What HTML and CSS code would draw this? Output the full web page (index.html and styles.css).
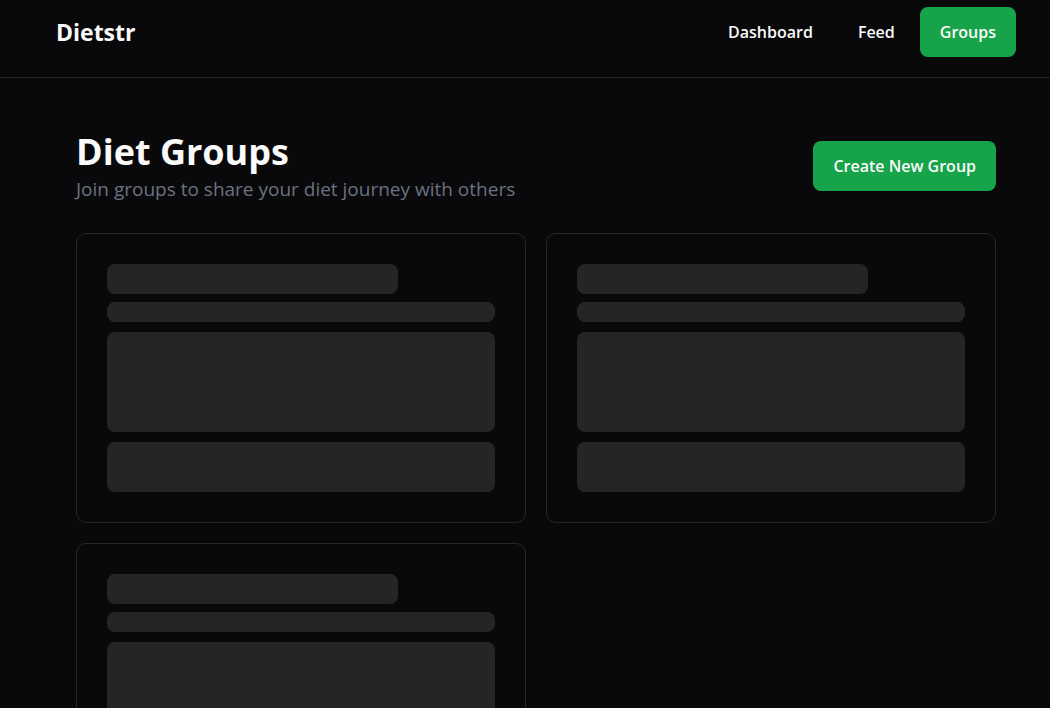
FILE: index.html
```html
<!DOCTYPE html>
<html lang="en">
<head>
<meta charset="utf-8">
<meta name="viewport" content="width=device-width, initial-scale=1">
<title>Dietstr</title>
<link rel="stylesheet" href="styles.css">
</head>
<body>
<header class="site-header">
  <a class="brand" href="#">Dietstr</a>
  <nav class="nav">
    <a class="btn" href="#">Dashboard</a>
    <a class="btn" href="#">Feed</a>
    <a class="btn btn-primary" href="#" aria-current="page">Groups</a>
  </nav>
</header>
<main class="page">
  <div class="page-head">
    <div>
      <h1 class="title">Diet Groups</h1>
      <p class="subtitle">Join groups to share your diet journey with others</p>
    </div>
    <button class="btn btn-primary" type="button">Create New Group</button>
  </div>
  <div class="cards" aria-busy="true">
    <div class="card">
      <div class="bone bone-title"></div>
      <div class="bone bone-line"></div>
      <div class="bone bone-body"></div>
      <div class="bone bone-action"></div>
    </div>
    <div class="card">
      <div class="bone bone-title"></div>
      <div class="bone bone-line"></div>
      <div class="bone bone-body"></div>
      <div class="bone bone-action"></div>
    </div>
    <div class="card">
      <div class="bone bone-title"></div>
      <div class="bone bone-line"></div>
      <div class="bone bone-body"></div>
      <div class="bone bone-action"></div>
    </div>
  </div>
</main>
</body>
</html>
```
FILE: styles.css
```css
* {
  box-sizing: border-box;
}

body {
  margin: 0;
  background: #09090b;
  color: #fafafa;
  font-family: "Segoe UI", "Open Sans", "Noto Sans", sans-serif;
}

.site-header {
  display: flex;
  align-items: center;
  justify-content: space-between;
  padding: 7px 34px 20px 56px;
  border-bottom: 1px solid #27272a;
}

.brand {
  color: inherit;
  font-size: 23px;
  font-weight: 700;
  line-height: 36px;
  text-decoration: none;
}

.nav {
  display: flex;
  gap: 5px;
}

.btn {
  display: inline-flex;
  align-items: center;
  justify-content: center;
  height: 50px;
  padding: 0 20px;
  border: 0;
  border-radius: 8px;
  background: transparent;
  color: #fafafa;
  font-family: inherit;
  font-size: 16px;
  font-weight: 600;
  line-height: 24px;
  text-decoration: none;
  white-space: nowrap;
}

.btn-primary {
  background: #16a34a;
}

.page {
  padding: 50px 54px 40px 76px;
}

.page-head {
  display: flex;
  align-items: center;
  justify-content: space-between;
  margin-bottom: 30px;
}

.title {
  margin: 0;
  font-size: 36px;
  font-weight: 700;
  line-height: 47px;
}

.subtitle {
  margin: 0;
  color: #6b7280;
  font-size: 19px;
  line-height: 28px;
}

.cards {
  display: grid;
  grid-template-columns: 1fr 1fr;
  gap: 20px;
}

.card {
  padding: 30px;
  border: 1px solid #27272a;
  border-radius: 10px;
}

.bone {
  border-radius: 8px;
  background: #252527;
}

.bone-title {
  width: 75%;
  height: 30px;
  margin-bottom: 8px;
}

.bone-line {
  height: 20px;
  margin-bottom: 10px;
}

.bone-body {
  height: 100px;
  margin-bottom: 10px;
}

.bone-action {
  height: 50px;
}
```
